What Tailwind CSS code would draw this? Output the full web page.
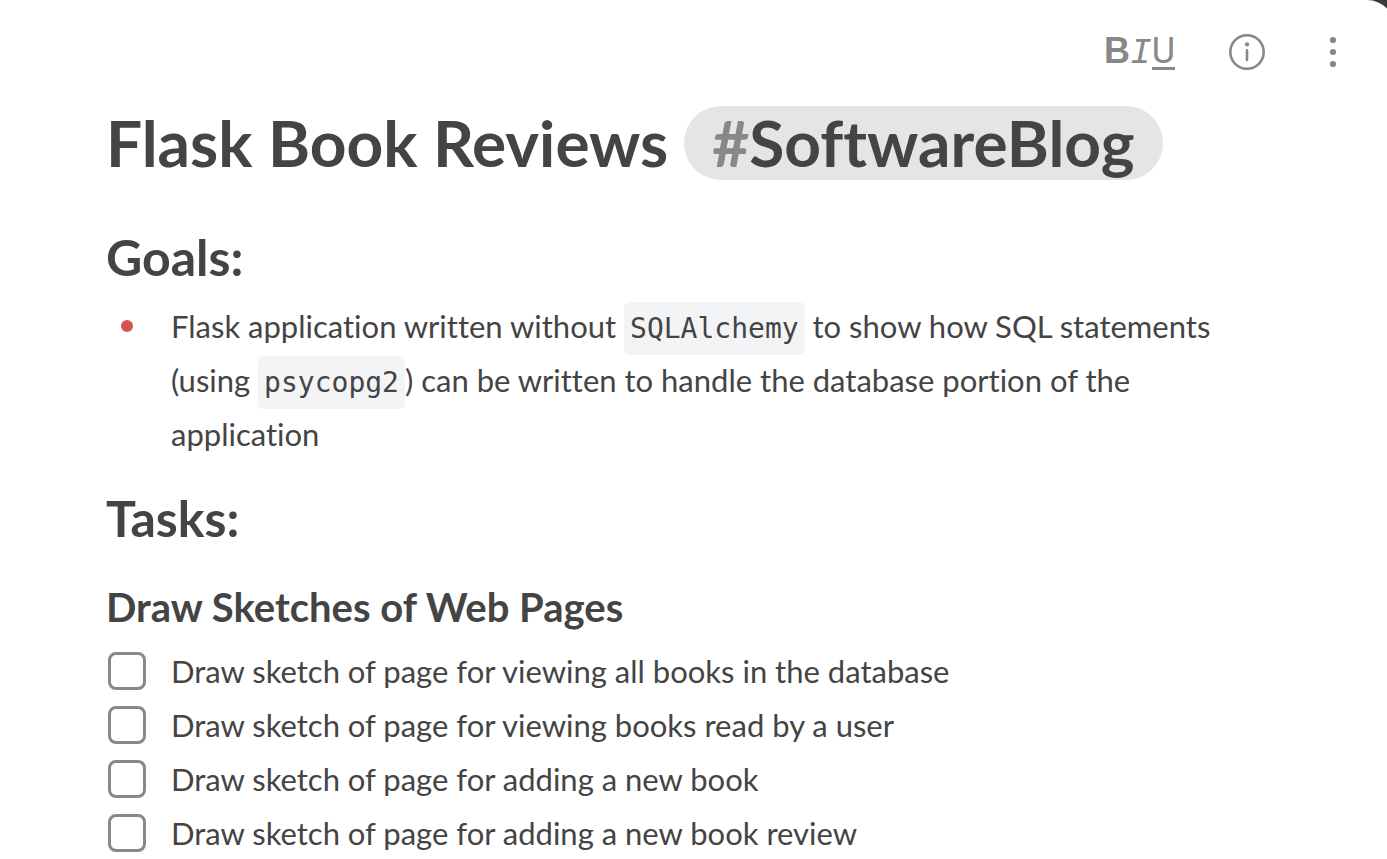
<!DOCTYPE html>
<html lang="en">
<head>
    <meta charset="UTF-8">
    <meta name="viewport" content="width=device-width, initial-scale=1.0">
    <title>Flask Book Reviews</title>
    <script src="https://cdn.jsdelivr.net/npm/@tailwindcss/browser@4"></script>
</head>
<body class="bg-[#3a3a3c] overflow-x-hidden font-['Lato',sans-serif] [font-variant-ligatures:none] text-[#444444]">
    <div class="min-h-screen -mr-2 pr-2 bg-white rounded-tr-[28px]">
        <!-- Toolbar -->
        <header class="flex items-center justify-end gap-[54px] h-[104px] pr-10 text-[#888888]">
            <button type="button" aria-label="Text style" class="flex items-baseline text-[36px] leading-10 font-['Liberation_Sans',sans-serif]">
                <b>B</b><i class="font-['Liberation_Mono',monospace]">I</i><span class="border-b-3 leading-8 font-['Roboto',sans-serif]">U</span>
            </button>
            <button type="button" aria-label="Note info">
                <svg class="size-9" viewBox="0 0 36 36" fill="none" stroke="currentColor" stroke-width="2.6" stroke-linecap="round">
                    <circle cx="18" cy="18" r="16.7" />
                    <path d="M18 16.3v9.7" />
                    <circle cx="18" cy="10.4" r="2.1" fill="currentColor" stroke="none" />
                </svg>
            </button>
            <button type="button" aria-label="More" class="px-2">
                <svg class="w-3 h-9" viewBox="0 0 12 36" fill="currentColor">
                    <circle cx="6" cy="6" r="3.1" />
                    <circle cx="6" cy="18" r="3.1" />
                    <circle cx="6" cy="30" r="3.1" />
                </svg>
            </button>
        </header>

        <!-- Note -->
        <main class="px-[106px] pt-0.5">
            <h1 class="flex items-center gap-4 text-[64px] leading-[74px] font-bold whitespace-nowrap">
                Flask Book Reviews
                <a href="#SoftwareBlog" class="rounded-full bg-[#e4e5e6] px-7"><span class="text-[#888888]">#</span>SoftwareBlog</a>
            </h1>

            <h2 class="mt-12 text-[50px] leading-[58px] font-bold">Goals:</h2>
            <ul class="mt-[13px] text-[31px] leading-[54px]">
                <li class="flex">
                    <span class="flex h-[54px] w-[65px] shrink-0 items-center pl-[15px]"><span class="size-3 rounded-full bg-[#d05552]"></span></span>
                    <p>Flask application written without <code class="rounded-md bg-[#f3f4f6] px-1.5 py-2.5 text-[28px] leading-none font-['DejaVu_Sans_Mono',monospace]">SQLAlchemy</code> to show how SQL statements (using <code class="rounded-md bg-[#f3f4f6] px-1.5 py-2.5 text-[28px] leading-none font-['DejaVu_Sans_Mono',monospace]">psycopg2</code>) can be written to handle the database portion of the application</p>
                </li>
            </ul>

            <h2 class="mt-7 text-[50px] leading-[58px] font-bold">Tasks:</h2>

            <h3 class="mt-9 text-[40px] leading-[48px] font-bold">Draw Sketches of Web Pages</h3>
            <ul class="mt-[13px] text-[31px] leading-[54px]">
                <li class="flex items-center">
                    <input id="task1" type="checkbox" class="ml-0.5 mr-[25px] size-[38px] shrink-0 appearance-none rounded-lg border-3 border-[#888888]">
                    <label for="task1">Draw sketch of page for viewing all books in the database</label>
                </li>
                <li class="flex items-center">
                    <input id="task2" type="checkbox" class="ml-0.5 mr-[25px] size-[38px] shrink-0 appearance-none rounded-lg border-3 border-[#888888]">
                    <label for="task2">Draw sketch of page for viewing books read by a user</label>
                </li>
                <li class="flex items-center">
                    <input id="task3" type="checkbox" class="ml-0.5 mr-[25px] size-[38px] shrink-0 appearance-none rounded-lg border-3 border-[#888888]">
                    <label for="task3">Draw sketch of page for adding a new book</label>
                </li>
                <li class="flex items-center">
                    <input id="task4" type="checkbox" class="ml-0.5 mr-[25px] size-[38px] shrink-0 appearance-none rounded-lg border-3 border-[#888888]">
                    <label for="task4">Draw sketch of page for adding a new book review</label>
                </li>
            </ul>
        </main>
    </div>
</body>
</html>
